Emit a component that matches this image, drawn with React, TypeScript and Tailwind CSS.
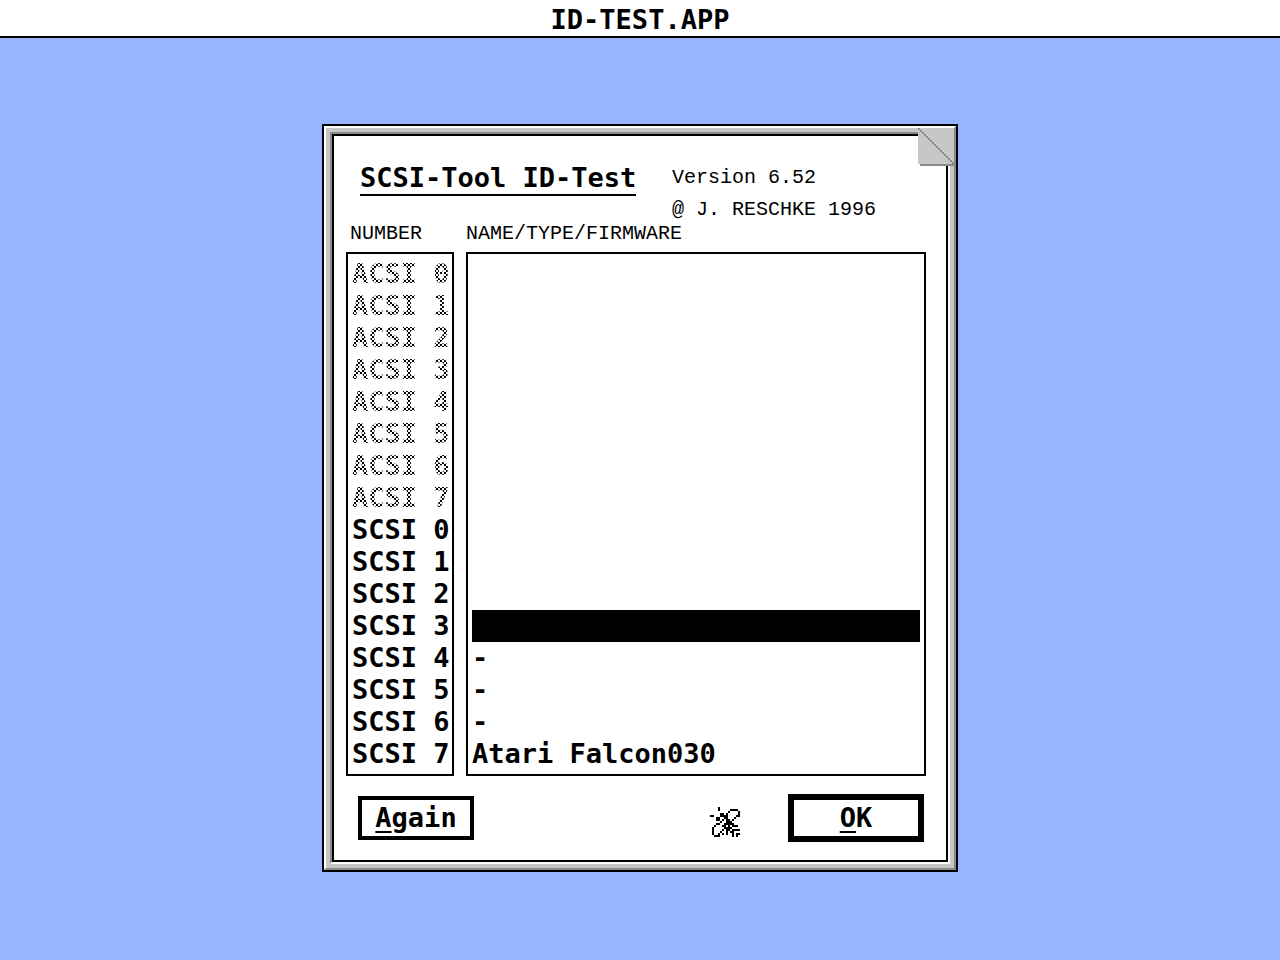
const ACSI_IDS = [0, 1, 2, 3, 4, 5, 6, 7];

const DEVICES = [
  ...ACSI_IDS.map((id) => ({ bus: "ACSI", id, name: "", enabled: false })),
  { bus: "SCSI", id: 0, name: "", enabled: true },
  { bus: "SCSI", id: 1, name: "", enabled: true },
  { bus: "SCSI", id: 2, name: "", enabled: true },
  { bus: "SCSI", id: 3, name: "", enabled: true, selected: true },
  { bus: "SCSI", id: 4, name: "-", enabled: true },
  { bus: "SCSI", id: 5, name: "-", enabled: true },
  { bus: "SCSI", id: 6, name: "-", enabled: true },
  { bus: "SCSI", id: 7, name: "Atari Falcon030", enabled: true },
];

// One character per pixel
const BEE = [
  "....#..........",
  "....#.....####.",
  ".........#....#",
  ".....##.#.....#",
  "##...####....##",
  "...##..##...#..",
  "...##.#.##.#...",
  ".....#..###....",
  "...##..#####...",
  "..#...##.#.###.",
  ".#.....####....",
  ".#....#.##.####",
  ".#...#..#.##...",
  ".#..#.#.#..#.##",
  "..###......#.#.",
];

function BeeIcon() {
  return (
    <svg width="30" height="38" viewBox="0 0 15 19" shapeRendering="crispEdges" aria-hidden="true">
      {BEE.map((row, y) =>
        row.split("").map((c, x) =>
          c === "#" ? <rect key={`${x}-${y}`} x={x} y={y + 4} width="1" height="1" /> : null
        )
      )}
    </svg>
  );
}

function FoldedCorner() {
  return (
    <svg
      className="absolute top-0 -right-0.5"
      width="38"
      height="38"
      viewBox="0 0 19 19"
      shapeRendering="crispEdges"
      aria-hidden="true"
    >
      <rect width="18" height="18" fill="#c6c6c6" />
      <rect x="1" y="18" width="18" height="1" fill="#8a8a8a" />
      <rect x="18" width="1" height="19" fill="#8a8a8a" />
      {Array.from({ length: 18 }, (_, i) => (
        <rect key={i} x={i} y={i} width="1" height="1" fill="#8a8a8a" />
      ))}
    </svg>
  );
}

function DeviceTable() {
  return (
    <table className="w-full table-fixed border-separate border-spacing-x-3 border-spacing-y-0 text-left">
      <thead className="font-['Liberation_Mono',monospace] text-[20px] leading-6">
        <tr>
          <th scope="col" className="h-[30px] w-[108px] p-0 pl-1 align-top font-normal">
            NUMBER
          </th>
          <th scope="col" className="p-0 align-top font-normal">
            NAME/TYPE/FIRMWARE
          </th>
        </tr>
      </thead>
      <tbody>
        {DEVICES.map((device, i) => {
          const edge =
            i === 0 ? "border-t-2 pt-1" : i === DEVICES.length - 1 ? "border-b-2 pb-1" : "";
          return (
            <tr key={`${device.bus}${device.id}`}>
              <td className={`border-x-2 border-black px-1 py-0 ${edge}`}>
                <div
                  className={
                    device.enabled
                      ? "h-8 whitespace-pre"
                      : "h-8 whitespace-pre bg-[conic-gradient(#000_25%,#fff_0_50%,#000_0_75%,#fff_0)] bg-[length:4px_4px] bg-clip-text text-transparent"
                  }
                >
                  {device.bus} {device.id}
                </div>
              </td>
              <td className={`border-x-2 border-black px-1 py-0 ${edge}`}>
                <div className={device.selected ? "h-8 bg-black text-white" : "h-8"}>
                  {device.name}
                </div>
              </td>
            </tr>
          );
        })}
      </tbody>
    </table>
  );
}

export default function App() {
  return (
    <div className="flex min-h-screen flex-col bg-[#96b4ff] font-['DejaVu_Sans_Mono',monospace] text-[27px] leading-8 font-bold text-black">
      {/* Menu bar */}
      <header className="border-b-2 border-black bg-white pt-1 text-center">ID-TEST.APP</header>

      <main className="flex flex-1 items-center justify-center pb-0.5">
        <section
          aria-labelledby="dialog-title"
          className="w-full max-w-[636px] border-2 border-black"
        >
          <div className="relative border-2 border-t-white border-r-[#8a8a8a] border-b-[#8a8a8a] border-l-white bg-[#c6c6c6] p-1">
            <div className="border-2 border-t-[#8a8a8a] border-r-white border-b-white border-l-[#8a8a8a]">
              <div className="border-2 border-black bg-white">
                <div className="flex items-start gap-9 pt-[26px] pl-[26px]">
                  <h1
                    id="dialog-title"
                    className="w-[276px] border-b-2 border-black whitespace-nowrap"
                  >
                    SCSI-Tool ID-Test
                  </h1>
                  <div className="flex flex-col gap-2 pt-1 font-['Liberation_Mono',monospace] text-[20px] leading-6 font-normal">
                    <p>Version 6.52</p>
                    <p>@ J. RESCHKE 1996</p>
                  </div>
                </div>

                <div className="pr-2">
                  <DeviceTable />
                </div>

                <div className="flex items-center pt-[18px] pr-[22px] pb-[18px] pl-6">
                  <button type="button" className="h-11 w-[116px] border-4 border-black">
                    <span className="underline decoration-2 underline-offset-4">A</span>gain
                  </button>
                  <div className="mr-12 ml-auto">
                    <BeeIcon />
                  </div>
                  <button type="button" className="h-12 w-[136px] border-[6px] border-black">
                    <span className="underline decoration-2 underline-offset-4">O</span>K
                  </button>
                </div>
              </div>
            </div>
            <FoldedCorner />
          </div>
        </section>
      </main>
    </div>
  );
}
